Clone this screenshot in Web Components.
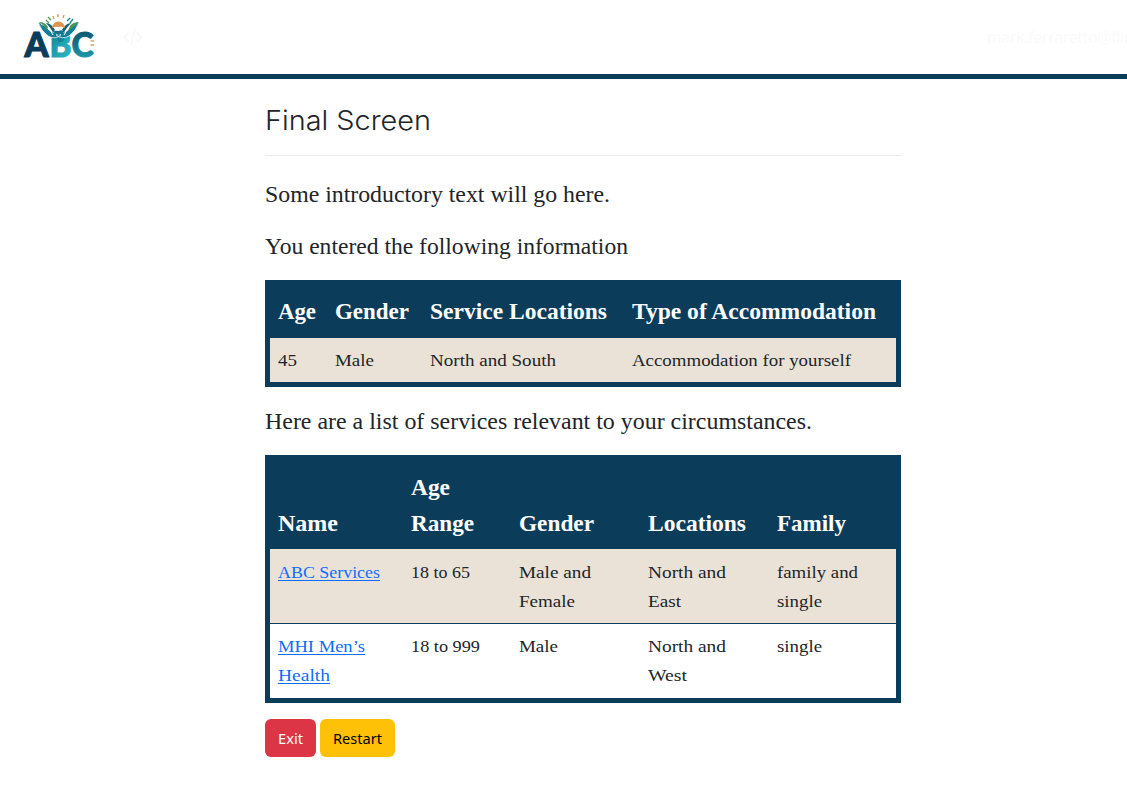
<!DOCTYPE html>
<html lang="en"><head><meta charset="utf-8"><title>Final Screen</title>
<style>
html,body{margin:0;height:100%;overflow:hidden;background:#fff;color:#212529;font-family:"Liberation Serif",serif}
</style></head><body>
<app-page></app-page>
<script>
const define=(name,html,setup)=>customElements.define(name,class extends HTMLElement{
  constructor(){super();const t=document.createElement('template');t.innerHTML=html;
    this.attachShadow({mode:'open'}).append(t.content.cloneNode(true));}
  connectedCallback(){if(setup)setup(this);}
});

/* One line of text, widened or narrowed so that it spans the given width. */
define('fit-text','<style>:host{display:inline-block;white-space:nowrap}span{display:inline-block;transform-origin:0 50%}:host([link]) span{text-decoration:underline;text-underline-offset:2px;text-decoration-thickness:1px}</style><span><slot></slot></span>',el=>{
  const w=+el.getAttribute('w'),s=el.shadowRoot.querySelector('span');
  const n=s.getBoundingClientRect().width;
  s.style.transform='scaleX('+(w/n).toFixed(4)+')';
  el.style.width=w+'px';
});

define('abc-logo',`<style>:host{display:block;width:76px;height:50px}svg{display:block;overflow:visible}
text{font:900 35px Lato,sans-serif}</style>
<svg width="76" height="50" viewBox="22 11 76 50">
<defs><linearGradient id="c" x1="0" y1="0" x2="0" y2="1"><stop offset="0" stop-color="#0e4965"/><stop offset=".5" stop-color="#126c83"/><stop offset="1" stop-color="#20a9b7"/></linearGradient>
<linearGradient id="b" x1="0" y1="0" x2="1" y2="1"><stop offset="0" stop-color="#126f87"/><stop offset=".55" stop-color="#21a5b5"/><stop offset="1" stop-color="#2abac5"/></linearGradient></defs>
<text x="24.500" y="56.500" fill="#0c3c5b" stroke="#0c3c5b" stroke-width="1.2" textLength="24" lengthAdjust="spacingAndGlyphs">A</text>
<path d="M54 36Q58 31 64 35L66 42L60 46L52 45Z" fill="#178196"/>
<text x="49.500" y="56.500" fill="url(#b)" stroke="url(#b)" stroke-width="1" textLength="22" lengthAdjust="spacingAndGlyphs">B</text>
<text x="71.500" y="56.500" fill="url(#c)" stroke="url(#c)" stroke-width="1" textLength="22" lengthAdjust="spacingAndGlyphs">C</text>
<path d="M38 22Q45 24 49 30Q53 34 57 32L61 35Q55 40 48 36Q41 31 38 22ZM79 22Q72 24 68 30Q64 34 60 32L56 35Q62 40 69 36Q76 31 79 22Z" fill="#157d94" stroke="#fff" stroke-width=".7"/>
<path d="M41 24Q49 27 53 35M76 24Q68 27 64 35" fill="none" stroke="#fff" stroke-width="1"/>
<path d="M39 22Q45 22 48 27L47 30Q43 24 39 22ZM79 22Q73 22 70 26L68 31Q74 27 79 22Z" fill="#44965a"/>
<path d="M46 23Q51 23 55 30L53 32Q49 26 46 23ZM71 23Q66 23 62 30L64 32Q68 26 71 23Z" fill="#185c7a"/>
<path d="M52 28A6.5 6.5 0 0 1 65 28Q61 26 58.5 27Q55 26 52 28Z" fill="#de9552"/>
<path d="M53 32Q55 30 58.5 31Q62 29 65 32L60 34H57Z" fill="#177287"/>
<g fill="none" stroke-width="1.4"><path d="M58 14V17M53 16L54 19" stroke="#dc9a59"/><path d="M64 15L63 18" stroke="#dc9a59"/><path d="M46 20L49 23M48 17L51 20" stroke="#4e9960"/><path d="M70 18L67 21M73 19L70 23" stroke="#21889a"/></g>
<path d="M90.500 41H94M90.500 45H94" stroke="#dda16c" stroke-width="1.3"/>
</svg>`);

define('site-header',`<style>:host{display:flex;box-sizing:border-box;height:79px;border-bottom:5px solid #0b3d5b;padding:11px 0 0 22px;align-items:flex-start}
.code{margin:17px 0 0 25px;display:block}
.mail{margin:16px 0 0 auto;width:140px;font:15.500px/20px "Noto Sans",sans-serif;letter-spacing:-.15px;color:#fafafa;white-space:nowrap}</style>
<abc-logo></abc-logo>
<svg class="code" width="20" height="18" viewBox="0 0 20 18" fill="none" stroke="#f8f8f8" stroke-width="1.6"><path d="M6 4L1.5 9L6 14M14 4L18.500 9L14 14M12 1L8 17"/></svg>
<div class="mail">mark.ferraretto@flin</div>`);

define('action-button',`<style>:host{display:block}button{box-sizing:border-box;display:block;width:var(--w);height:38px;margin:0;padding:0;border:0;border-radius:6px;background:var(--bg);color:var(--fg);font:15px/38px "Noto Sans",sans-serif;text-align:center}</style><button><slot></slot></button>`);

define('data-table',`<style>:host{display:block;border:5px solid #0b3d5b;margin-bottom:16px}</style><slot></slot>`);

/* A table row: column widths are inherited from the table through --cols. */
define('table-row',`<style>:host{display:grid;grid-template-columns:var(--cols);box-sizing:border-box;height:var(--h);padding-top:var(--pt,8px);font-size:17.500px;line-height:29px}
:host([head]){background:#0b3d5b;color:#fff;font-weight:700;font-size:22.500px;line-height:36px;align-items:end;padding:0 0 var(--pb,8px)}
:host([shade]){background:#ebe2d7}
:host([line]){border-bottom:1px solid #0b3d5b}</style><slot></slot>`);

define('table-cell',`<style>:host{display:block;padding:0 8px}
::slotted(a){color:#0d6efd}</style><slot></slot>`);

define('app-page',`<style>:host{display:block}
main{width:636px;margin:0 0 0 265px;padding-top:20px}
h1{margin:0;box-sizing:border-box;border-bottom:1px solid #e9e9ea;font:300 27.500px/42px Inter,sans-serif;height:57px}
p{margin:0 0 15px;padding-top:1px;font-size:23px;line-height:36px;height:36px}
p:first-of-type{margin-top:20px}
.one{--cols:57px 95px 202px 272px}
.two{--cols:133px 108px 129px 129px 127px}
.actions{display:flex;gap:4px}</style>
<site-header></site-header>
<main>
<h1><fit-text w="166">Final Screen</fit-text></h1>
<p><fit-text w="345">Some introductory text will go here.</fit-text></p>
<p><fit-text w="363">You entered the following information</fit-text></p>
<data-table class="one">
<table-row head style="--h:53px"><table-cell><fit-text w="38">Age</fit-text></table-cell><table-cell><fit-text w="74">Gender</fit-text></table-cell><table-cell><fit-text w="177">Service Locations</fit-text></table-cell><table-cell><fit-text w="244">Type of Accommodation</fit-text></table-cell></table-row>
<table-row shade style="--h:44px"><table-cell><fit-text w="19">45</fit-text></table-cell><table-cell><fit-text w="39">Male</fit-text></table-cell><table-cell><fit-text w="126">North and South</fit-text></table-cell><table-cell><fit-text w="219">Accommodation for yourself</fit-text></table-cell></table-row>
</data-table>
<p><fit-text w="547">Here are a list of services relevant to your circumstances.</fit-text></p>
<data-table class="two">
<table-row head style="--h:89px;--pb:7px"><table-cell><fit-text w="60">Name</fit-text></table-cell><table-cell><fit-text w="39">Age</fit-text><br><fit-text w="63">Range</fit-text></table-cell><table-cell><fit-text w="75">Gender</fit-text></table-cell><table-cell><fit-text w="98">Locations</fit-text></table-cell><table-cell><fit-text w="69">Family</fit-text></table-cell></table-row>
<table-row shade line style="--h:75px;--pt:9px"><table-cell><a><fit-text link w="102">ABC Services</fit-text></a></table-cell><table-cell><fit-text w="59">18 to 65</fit-text></table-cell><table-cell><fit-text w="72">Male and</fit-text><br><fit-text w="56">Female</fit-text></table-cell><table-cell><fit-text w="78">North and</fit-text><br><fit-text w="33">East</fit-text></table-cell><table-cell><fit-text w="81">family and</fit-text><br><fit-text w="45">single</fit-text></table-cell></table-row>
<table-row style="--h:74px"><table-cell><a><fit-text link w="87">MHI Men’s</fit-text><br><fit-text link w="52">Health</fit-text></a></table-cell><table-cell><fit-text w="69">18 to 999</fit-text></table-cell><table-cell><fit-text w="39">Male</fit-text></table-cell><table-cell><fit-text w="78">North and</fit-text><br><fit-text w="39">West</fit-text></table-cell><table-cell><fit-text w="45">single</fit-text></table-cell></table-row>
</data-table>
<div class="actions">
<action-button style="--w:51px;--bg:#dc3545;--fg:#fff"><fit-text w="25">Exit</fit-text></action-button>
<action-button style="--w:75px;--bg:#ffc107;--fg:#000"><fit-text w="49">Restart</fit-text></action-button>
</div>
</main>`);
</script></body></html>
